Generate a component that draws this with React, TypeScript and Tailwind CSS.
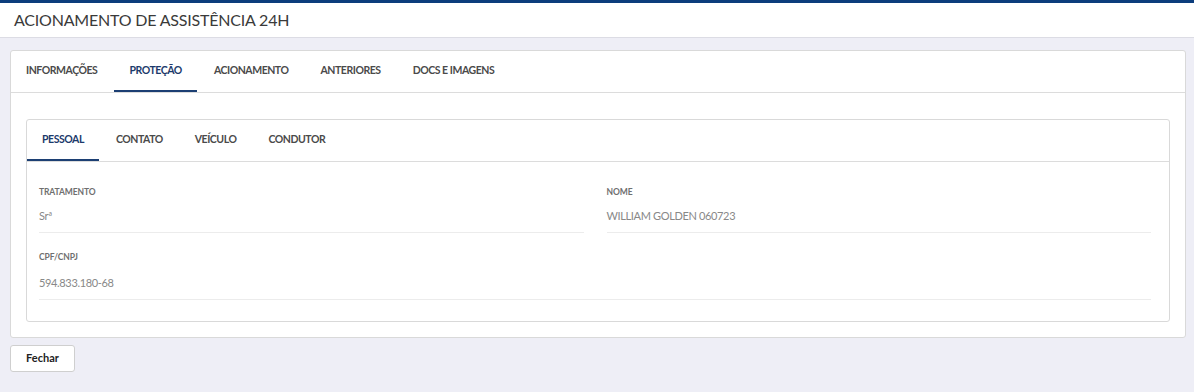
import { useState } from "react"

const MAIN_TABS = ["INFORMAÇÕES", "PROTEÇÃO", "ACIONAMENTO", "ANTERIORES", "DOCS E IMAGENS"]
const SUB_TABS = ["PESSOAL", "CONTATO", "VEÍCULO", "CONDUTOR"]

function Field({
  label,
  value,
  className = "",
  valueClass = "mt-[10px]",
}: {
  label: string
  value: string
  className?: string
  valueClass?: string
}) {
  return (
    <div className={`border-b border-[#ececec] pt-[18px] pb-[8px] ${className}`}>
      <div className="text-[8.5px] font-bold leading-[12px] tracking-[-0.1px] text-[#6f6f6f]">{label}</div>
      <div className={`${valueClass} text-[11px] leading-[16px] tracking-[-0.35px] text-[#888]`}>{value}</div>
    </div>
  )
}

function Tab({ label, active, onClick }: { label: string; active: boolean; onClick: () => void }) {
  return (
    <button
      onClick={onClick}
      className={`px-[15px] pt-[1px] text-[10.5px] font-bold tracking-[-0.45px] border-b-2 ${
        active ? "border-[#1c3f73] text-[#1c3a6b]" : "border-transparent text-[#4a4a4a]"
      }`}
    >
      {label}
    </button>
  )
}

export default function App() {
  const [mainTab, setMainTab] = useState("PROTEÇÃO")
  const [subTab, setSubTab] = useState("PESSOAL")

  return (
    <div className="min-h-[392px] bg-[#eeeef6] font-['Lato',sans-serif] text-[#333]">
      {/* Header */}
      <div className="border-t-[3px] border-b border-t-[#0c3d7c] border-b-[#dcdce4] bg-white">
        <h1 className="h-[34px] pl-[14px] pt-[6px] text-[16px] leading-[22px] font-normal tracking-[-0.2px] text-[#3a3a3a]">
          ACIONAMENTO DE ASSISTÊNCIA 24H
        </h1>
      </div>

      <div className="pl-[10px] pr-[8px] pt-[12px]">
        {/* Outer card */}
        <div className="rounded-[3px] border border-[#d9d9d9] bg-white">
          <div className="flex h-[42px] gap-[2px] border-b border-[#dcdcdc]">
            {MAIN_TABS.map((t) => (
              <Tab key={t} label={t} active={t === mainTab} onClick={() => setMainTab(t)} />
            ))}
          </div>

          <div className="px-[15px] pt-[26px] pb-[15px]">
            {/* Inner card */}
            <div className="rounded-[3px] border border-[#d9d9d9] bg-white">
              <div className="flex h-[42px] gap-[2px] border-b border-[#dcdcdc]">
                {SUB_TABS.map((t) => (
                  <Tab key={t} label={t} active={t === subTab} onClick={() => setSubTab(t)} />
                ))}
              </div>

              <div className="grid grid-cols-2 gap-x-[23px] pl-[12px] pr-[18px] pt-[6px] pb-[21px]">
                <Field label="TRATAMENTO" value="Srª" />
                <Field label="NOME" value="WILLIAM GOLDEN 060723" />
                <Field
                  label="CPF/CNPJ"
                  value="594.833.180-68"
                  className="col-span-2"
                  valueClass="mt-[12px]"
                />
              </div>
            </div>
          </div>
        </div>

        <button className="mt-[7px] h-[27px] w-[65px] rounded-[3px] border border-[#cfcfcf] bg-white text-[11px] font-bold text-[#222]">
          Fechar
        </button>
      </div>
    </div>
  )
}
